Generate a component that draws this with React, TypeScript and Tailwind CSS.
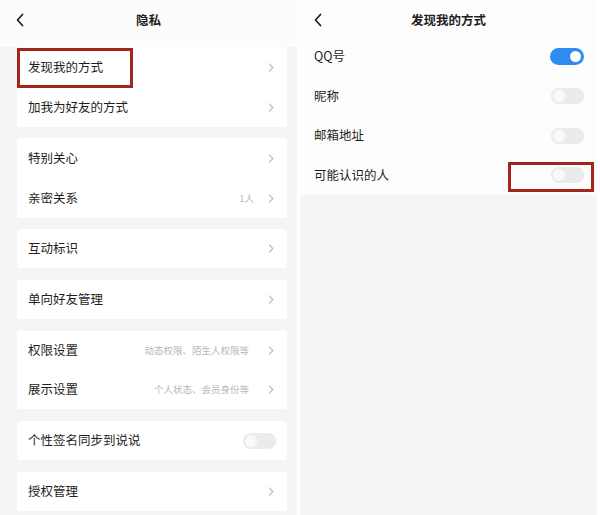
import React from "react";

const font = { fontFamily: '"Noto Sans CJK SC", "Noto Sans", sans-serif' };

function Back() {
  return (
    <svg width="10" height="14" viewBox="0 0 10 14" className="block">
      <path d="M7.5 1.5 L2.5 7 L7.5 12.5" fill="none" stroke="#222" strokeWidth="1.8" strokeLinecap="round" strokeLinejoin="round" />
    </svg>
  );
}

function Chevron() {
  return (
    <svg width="6" height="9" viewBox="0 0 6 9" className="block">
      <path d="M1.5 1 L4.8 4.5 L1.5 8" fill="none" stroke="#c0c0c0" strokeWidth="1.2" strokeLinecap="round" strokeLinejoin="round" />
    </svg>
  );
}

function Toggle({ on }: { on?: boolean }) {
  return on ? (
    <div className="w-[34px] h-[17px] rounded-full bg-[#2f8bf0] flex items-center justify-end pr-[3px]">
      <div className="w-[11px] h-[11px] rounded-full bg-white" />
    </div>
  ) : (
    <div className="w-[33px] h-[16px] rounded-full bg-[#ebebeb] flex items-center pl-[2px]">
      <div className="w-[12px] h-[12px] rounded-full bg-[#f9f9f9]" />
    </div>
  );
}

function Row({ label, sub, h, toggle, subGap = "mr-[19px]" }: { label: string; sub?: string; h: string; toggle?: boolean; subGap?: string }) {
  return (
    <div className={`flex items-center pl-[11px] pr-[13px] ${h}`}>
      <span className="text-[12.5px] text-[#1e1e1e] flex-1">{label}</span>
      {sub && <span className={`text-[9.5px] text-[#b8b8b8] ${subGap}`}>{sub}</span>}
      {toggle ? (
        <div className="-mr-[2px]"><Toggle /></div>
      ) : (
        <Chevron />
      )}
    </div>
  );
}

export default function App() {
  return (
    <div className="w-[600px] h-[515px] bg-white flex overflow-hidden" style={font}>
      {/* Left panel */}
      <div className="w-[297px] h-full bg-[#f5f5f5] flex flex-col">
        <div className="h-[47px] bg-[#fcfcfc] relative flex items-start pt-[13px]">
          <div className="pl-[15px]"><Back /></div>
          <div className="absolute left-0 right-0 top-[11px] text-center text-[12.5px] font-semibold text-[#1e1e1e]">隐私</div>
        </div>
        <div className="flex flex-col pl-[17px] pr-[10px]">
          <div className="bg-white rounded-[3px] relative">
            <Row label="发现我的方式" h="h-[40px]" />
            <Row label="加我为好友的方式" h="h-[40px]" />
            <div className="absolute left-0 top-[1px] w-[116px] h-[40px] border-[3px] border-[#a3261d]" />
          </div>
          <div className="bg-white rounded-[3px] mt-[11px]">
            <Row label="特别关心" h="h-[40px]" />
            <Row label="亲密关系" sub="1人" h="h-[40px]" subGap="mr-[14px]" />
          </div>
          <div className="bg-white rounded-[3px] mt-[11px]">
            <Row label="互动标识" h="h-[39px]" />
          </div>
          <div className="bg-white rounded-[3px] mt-[12px]">
            <Row label="单向好友管理" h="h-[39px]" />
          </div>
          <div className="bg-white rounded-[3px] mt-[12px]">
            <Row label="权限设置" sub="动态权限、陌生人权限等" h="h-[39px]" />
            <Row label="展示设置" sub="个人状态、会员身份等" h="h-[39px]" />
          </div>
          <div className="bg-white rounded-[3px] mt-[12px]">
            <Row label="个性签名同步到说说" h="h-[39px]" toggle />
          </div>
          <div className="bg-white rounded-[3px] mt-[12px]">
            <Row label="授权管理" h="h-[39px]" />
          </div>
        </div>
      </div>

      {/* Right panel */}
      <div className="w-[297px] ml-[3px] h-full bg-[#f5f5f5] flex flex-col">
        <div className="bg-[#fdfdfd]">
          <div className="h-[37px] relative pt-[13px]">
            <div className="pl-[13px]"><Back /></div>
            <div className="absolute left-0 right-0 top-[11px] text-center text-[12.5px] font-semibold text-[#1e1e1e]">发现我的方式</div>
          </div>
          {[
            { l: "QQ号", on: true },
            { l: "昵称" },
            { l: "邮箱地址" },
            { l: "可能认识的人", box: true },
          ].map((r) => (
            <div key={r.l} className="h-[39.5px] flex items-center pl-[14px] pr-[13px] relative">
              <span className="text-[12.5px] text-[#1e1e1e] flex-1">{r.l}</span>
              <Toggle on={r.on} />
              {r.box && (
                <div className="absolute left-[208px] top-[6px] w-[86px] h-[30px] border-[3px] border-[#a3261d]" />
              )}
            </div>
          ))}
        </div>
      </div>
    </div>
  );
}
